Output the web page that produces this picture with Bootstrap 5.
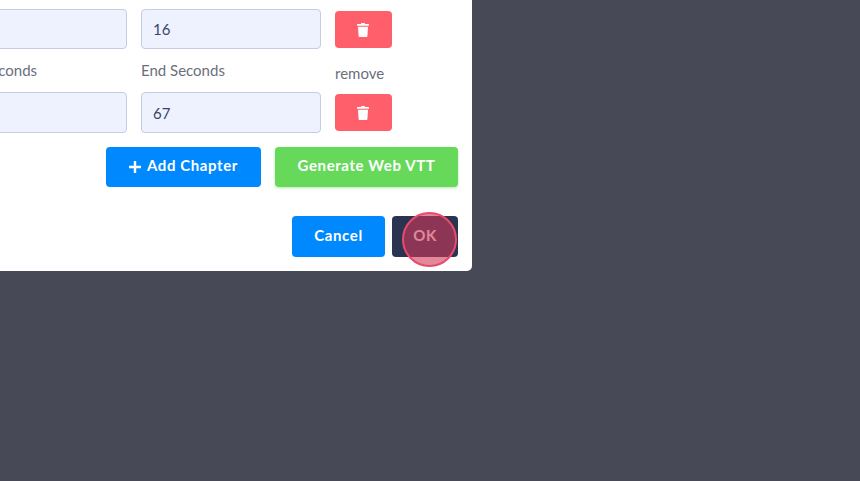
<!doctype html>
<html lang="en">
<head>
<meta charset="utf-8">
<title>Chapters</title>
<link href="https://cdn.jsdelivr.net/npm/bootstrap@5.3.0/dist/css/bootstrap.min.css" rel="stylesheet">
<style>
html,body{height:100%;overflow:hidden}
body{background:#474956;font-family:"Lato","Noto Sans",sans-serif;color:#6b6f7b}
.sheet{background:#fff;width:532px;margin-left:-60px;margin-top:-23px;border-radius:5px;padding:0 14px 14px 7px}
.chapter-row{display:flex;gap:14px;margin-bottom:11px}
.field-col{width:180px}
.field-lbl{font-size:15px;line-height:20px;margin-bottom:8px;display:block;height:24px;color:#6b6f7b}
.action-col{width:57px}
.action-lbl{font-size:15px;line-height:20px;display:block;height:21px;margin-top:3px;margin-bottom:10px}
.form-control.fld{height:40px;background:#eef2fe;border:1px solid #c7cde0;border-radius:4px;font-size:15px;color:#3a4468;padding:0 11px;box-shadow:none}
.chapter-row.second .fld{height:41px}
.btn.trash{width:57px;height:37px;background:#fe5f6b;border:0;border-radius:4px;padding:0 2px 0 0;display:flex;align-items:center;justify-content:center}
.btn.act{font-weight:700;font-size:15px;letter-spacing:.6px;border:0;border-radius:4px;color:#fff;padding:0 0 3px;display:flex;align-items:center;justify-content:center}
.tool-row{display:flex;justify-content:flex-end;gap:14px;margin-top:14px}
.foot-row{display:flex;justify-content:flex-end;gap:7px;margin-top:29px}
.btn.b-blue{background:#0088ff}
.btn.b-green{background:#66d95a;box-shadow:0 1px 3px rgba(102,217,90,.5)}
.btn.b-dark{background:#2a3450}
.w-add{width:155px;height:40px}
.w-add svg{margin-right:6px;margin-top:3px}
.w-gen{width:183px;height:40px}
.w-can{width:93px;height:41px}
.w-ok{width:66px;height:41px}
.click-ring{position:absolute;left:402px;top:212px;width:55px;height:55px;border-radius:50%;background:rgba(209,55,88,.6);border:2px solid #e84a6b;pointer-events:none}
</style>
</head>
<body>
<div class="sheet">
  <div class="chapter-row">
    <div class="field-col"><label class="field-lbl">Start Seconds</label><input class="form-control fld" value=""></div>
    <div class="field-col"><label class="field-lbl">End Seconds</label><input class="form-control fld" value="16"></div>
    <div class="action-col"><span class="action-lbl">remove</span>
      <button class="btn trash" aria-label="remove"><svg width="12" height="14" viewBox="0 0 12 14"><path fill="#fff" d="M4.400 0h3.200l.5 1H11.500c.3 0 .5.2.5.5v1c0 .2-.1.3-.3.3H.3C.1 2.800 0 2.700 0 2.500v-1c0-.3.2-.5.5-.5h3.400zM1 3.700h10l-.6 9.300c0 .6-.5 1-1 1H2.600c-.5 0-1-.4-1-1z"/></svg></button>
    </div>
  </div>
  <div class="chapter-row second">
    <div class="field-col"><label class="field-lbl">Start Seconds</label><input class="form-control fld" value=""></div>
    <div class="field-col"><label class="field-lbl">End Seconds</label><input class="form-control fld" value="67"></div>
    <div class="action-col"><span class="action-lbl">remove</span>
      <button class="btn trash" aria-label="remove"><svg width="12" height="14" viewBox="0 0 12 14"><path fill="#fff" d="M4.400 0h3.200l.5 1H11.500c.3 0 .5.2.5.5v1c0 .2-.1.3-.3.3H.3C.1 2.800 0 2.700 0 2.500v-1c0-.3.2-.5.5-.5h3.400zM1 3.700h10l-.6 9.300c0 .6-.5 1-1 1H2.600c-.5 0-1-.4-1-1z"/></svg></button>
    </div>
  </div>
  <div class="tool-row">
    <button class="btn act b-blue w-add"><svg width="12" height="12" viewBox="0 0 12 12"><path fill="#fff" d="M4.800 0h2.400v4.800H12v2.400H7.200V12H4.800V7.200H0V4.800h4.800z"/></svg>Add Chapter</button>
    <button class="btn act b-green w-gen">Generate Web VTT</button>
  </div>
  <div class="foot-row">
    <button class="btn act b-blue w-can">Cancel</button>
    <button class="btn act b-dark w-ok">OK</button>
  </div>
</div>
<div class="click-ring"></div>
<script src="https://cdn.jsdelivr.net/npm/bootstrap@5.3.0/dist/js/bootstrap.bundle.min.js"></script>
</body>
</html>
